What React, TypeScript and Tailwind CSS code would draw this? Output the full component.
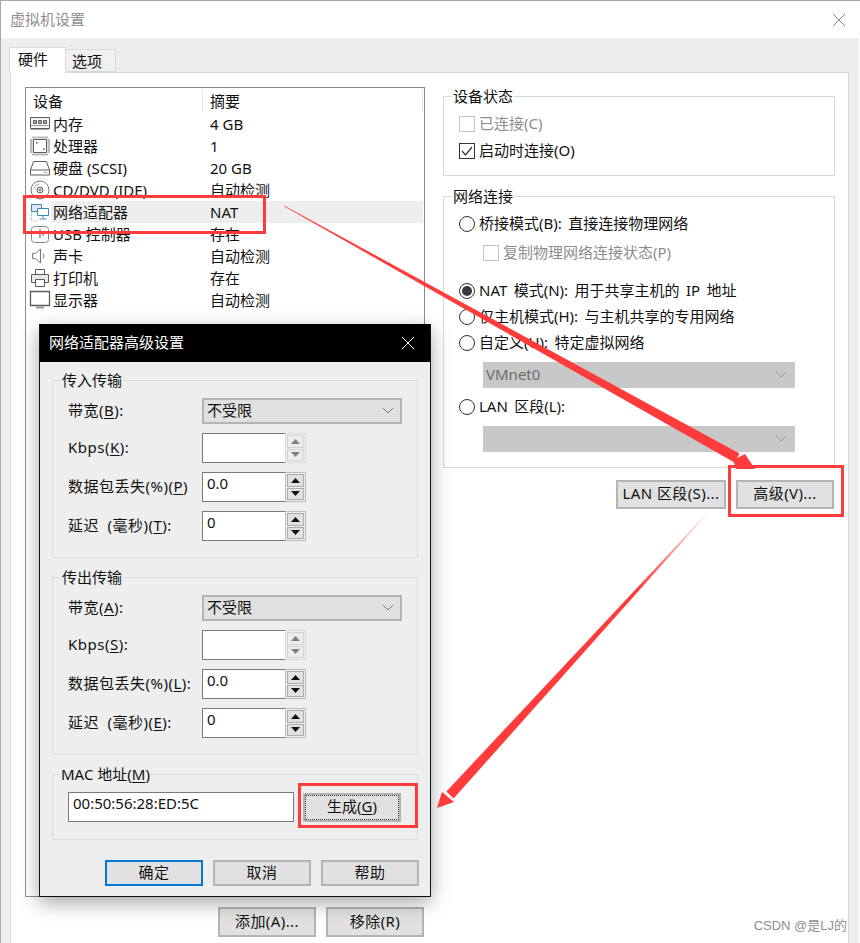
import React from 'react';

const U = ({ children }: { children: React.ReactNode }) => <span className="underline underline-offset-2">{children}</span>;

const Ic = ({ children }: { children: React.ReactNode }) => (
  <svg width="22" height="22" viewBox="0 0 22 22" fill="none" stroke="#5c5c5c" strokeWidth="1">{children}</svg>
);

const icons: Record<string, React.ReactNode> = {
  mem: (
    <Ic>
      <path d="M1.500 4.500h19v11h-19z" fill="#f4f4f4" />
      <path d="M1.500 12.500h19" stroke="#999" />
      <path d="M4.500 7.500h3v3h-3zM9.500 7.500h3v3h-3zM14.500 7.500h3v3h-3z" fill="#aaa" />
      <path d="M2 16.500h18" stroke="#aaa" />
    </Ic>
  ),
  cpu: (
    <Ic>
      <path d="M4.500 4.500h13v13h-13z" fill="#fff" />
      <path d="M4 1.500v2M6 1.500v2M8 1.500v2M10 1.500v2M12 1.500v2M14 1.500v2M16 1.500v2M18 1.500v2M4 18.500v2M6 18.500v2M8 18.500v2M10 18.500v2M12 18.500v2M14 18.500v2M16 18.500v2M18 18.500v2M1 5h2.500M1 7h2.500M1 9h2.500M1 11h2.500M1 13h2.500M1 15h2.500M1 17h2.500M18.500 5H21M18.500 7H21M18.500 9H21M18.500 11H21M18.500 13H21M18.500 15H21M18.500 17H21" stroke="#777" />
      <path d="M7 7h1.500v1.500H7zM14 13.500h1.500V15H14z" fill="#555" stroke="none" />
    </Ic>
  ),
  hdd: (
    <Ic>
      <path d="M1.500 13l3-8.500h13l3 8.500v5h-19z" fill="#fff" />
      <path d="M1.500 13h19" />
      <path d="M15 15.500h3" stroke="#999" />
    </Ic>
  ),
  cd: (
    <Ic>
      <circle cx="11" cy="11" r="9" fill="#fff" stroke="#777" />
      <circle cx="11" cy="11" r="3" fill="#ddd" />
      <circle cx="11" cy="11" r="1" fill="#666" stroke="none" />
      <path d="M5 10a6 6 0 0 1 5-5" stroke="#aaa" />
    </Ic>
  ),
  net: (
    <Ic>
      <path d="M2.500 3.500h10v7h-10z" fill="#dbeaf6" stroke="#3f85b8" />
      <path d="M8.500 7.500h11v7h-11z" fill="#fff" stroke="#3f85b8" />
      <path d="M14 14.500v3M10.500 18h7" stroke="#3f85b8" />
      <path d="M2.500 12v8M2.500 20h5" stroke="#aaa" strokeDasharray="1 1" />
    </Ic>
  ),
  usb: (
    <Ic>
      <rect x="2.500" y="3.500" width="17" height="16" rx="3" fill="#fff" stroke="#888" />
      <path d="M11 6v9M11 9l3 2v2M11 11L8 9" stroke="#555" />
    </Ic>
  ),
  snd: (
    <Ic>
      <path d="M3.500 8.500h3l5-4.500v14l-5-4.500h-3z" fill="#fff" stroke="#777" />
      <path d="M14 8.500a4 4 0 0 1 0 5" stroke="#888" />
    </Ic>
  ),
  prn: (
    <Ic>
      <path d="M6.500 2.500h9v5h-9z" fill="#fff" />
      <path d="M2.500 7.500h17v8h-17z" fill="#e8e8e8" />
      <path d="M6.500 12.500h9v7h-9z" fill="#fff" />
    </Ic>
  ),
  mon: (
    <Ic>
      <path d="M1.500 2.500h19v14h-19z" fill="#fff" strokeWidth="1.300" />
      <path d="M7 18.500h8" stroke="#999" strokeWidth="2" />
    </Ic>
  ),
};

const devices: [string, React.ReactNode, string][] = [
  ['mem', '内存', '4 GB'],
  ['cpu', '处理器', '1'],
  ['hdd', '硬盘 (SCSI)', '20 GB'],
  ['cd', 'CD/DVD (IDE)', '自动检测'],
  ['net', '网络适配器', 'NAT'],
  ['usb', 'USB 控制器', '存在'],
  ['snd', '声卡', '自动检测'],
  ['prn', '打印机', '存在'],
  ['mon', '显示器', '自动检测'],
];

const Btn = ({ w, h = 'h-[29px]', children, bc = 'border-[#b4b4b4]' }: { w: string; h?: string; children: React.ReactNode; bc?: string }) => (
  <div className={`${w} ${h} flex items-center justify-center bg-[#e1e1e1] border-2 ${bc} pb-[2px] leading-none tracking-[0.4px]`}>{children}</div>
);

const Chevron = ({ color = '#777' }: { color?: string }) => (
  <svg width="12" height="8" viewBox="0 0 12 8" fill="none" stroke={color}><path d="M1 1l5 5 5-5" /></svg>
);

const Check = ({ checked, disabled }: { checked?: boolean; disabled?: boolean }) => (
  <span className={`w-[16px] h-[16px] border flex items-center justify-center shrink-0 bg-white ${disabled ? 'border-[#c4c4c4]' : 'border-[#333]'}`}>
    {checked && <svg width="14" height="14" viewBox="0 0 14 14" fill="none" stroke="#333" strokeWidth="1.200"><path d="M2 7l3.500 4L12 3" /></svg>}
  </span>
);

const Radio = ({ on }: { on?: boolean }) => (
  <span className="w-[16px] h-[16px] rounded-full border border-[#333] flex items-center justify-center shrink-0 bg-white">
    {on && <span className="w-[10px] h-[10px] rounded-full bg-[#3a3a44]" />}
  </span>
);

const Opt = ({ children, mt = '' }: { children: React.ReactNode; mt?: string }) => (
  <div className={`h-[26px] flex items-center gap-[4px] [word-spacing:2.5px] ${mt}`}>{children}</div>
);

const Tx = ({ children, c = '' }: { children: React.ReactNode; c?: string }) => (
  <span className={`pb-[2px] whitespace-nowrap ${c}`}>{children}</span>
);

const Tri = ({ up, dim }: { up?: boolean; dim?: boolean }) => (
  <div className={`flex-1 flex items-center justify-center border ${dim ? 'bg-[#ececec] border-[#d4d4d4]' : 'bg-[#e1e1e1] border-[#adadad]'}`}>
    <svg width="9" height="5" viewBox="0 0 9 5" fill={dim ? '#808080' : '#111'}>
      <path d={up ? 'M4.500 0L9 5H0z' : 'M0 0h9L4.500 5z'} />
    </svg>
  </div>
);

const Spin = ({ value, dim }: { value?: string; dim?: boolean }) => (
  <div className="flex h-[30px] w-[104px]">
    <div className="w-[83px] bg-white border border-r-0 border-[#7a7a7a] pl-[4px] leading-[20px]">{value}</div>
    <div className={`w-[21px] flex flex-col gap-px p-px border ${dim ? 'border-[#d9d9d9]' : 'border-[#bcbcbc]'}`}>
      <Tri up dim={dim} />
      <Tri dim={dim} />
    </div>
  </div>
);

const Row = ({ label, children }: { label: React.ReactNode; children: React.ReactNode }) => (
  <div className="flex items-center">
    <div className="w-[134px] pb-[2px] tracking-[0.5px] [word-spacing:4px] whitespace-nowrap">{label}</div>
    {children}
  </div>
);

const Transfer = ({ title, keys }: { title: string; keys: [string, string, string, string] }) => (
  <fieldset className="border border-[#dcdcdc] h-[188px] pl-[15px]">
    <legend className="-ml-[7px] px-px leading-[20px]">{title}</legend>
    <div className="pt-[8px] flex flex-col gap-[9px]">
      <Row label={<>带宽(<U>{keys[0]}</U>):</>}>
        <div className="w-[200px] h-[26px] bg-[#e1e1e1] border-2 border-[#b4b4b4] flex items-center justify-between pl-[3px] pr-[6px]">
          <Tx>不受限</Tx><Chevron />
        </div>
      </Row>
      <Row label={<>Kbps(<U>{keys[1]}</U>):</>}><Spin dim /></Row>
      <Row label={<>数据包丢失(%)(<U>{keys[2]}</U>){keys[2] === 'L' ? ':' : ''}</>}><Spin value="0.0" /></Row>
      <Row label={<>延迟 (毫秒)(<U>{keys[3]}</U>):</>}><Spin value="0" /></Row>
    </div>
  </fieldset>
);

const Arrow = ({ points, head, fill = '#ff3b3b' }: { points: string; head: string; fill?: string }) => (
  <>
    <polygon points={points} fill={fill} />
    <polygon points={head} fill="#ff3b3b" />
  </>
);

export default function App() {
  return (
    <div className="relative w-[860px] h-[943px] overflow-hidden bg-white text-[15px] text-[#111] font-['Noto_Sans','Noto_Sans_CJK_SC',sans-serif] leading-[20px] border-l border-t border-[#a8a8a8]">
      <div className="h-[37px] pl-[9px] pr-[14px] flex items-center justify-between text-[#8f8f8f]">
        <Tx>虚拟机设置</Tx>
        <svg width="14" height="14" viewBox="0 0 14 14" stroke="#8a8a8a" strokeWidth="1"><path d="M1 1l12 12M13 1L1 13" /></svg>
      </div>

      <div className="h-[905px] w-[858px] bg-[#eeeeee] pl-[9px] pr-[10px] flex flex-col">
        <div className="h-[34px] flex items-end -ml-px">
          <div className="relative z-10 -mb-px w-[57px] h-[26px] bg-white border border-b-0 border-[#d9d9d9] pl-[8px] leading-[22px]">硬件</div>
          <div className="w-[50px] h-[23px] bg-[#f0f0f0] border border-l-0 border-[#d9d9d9] pl-[6px] leading-[22px]">选项</div>
        </div>

        <div className="flex-1 bg-white border border-b-0 border-[#d9d9d9] pl-[14px] pt-[13px] flex gap-[18px]">
          <div className="w-[400px] flex flex-col">
            <div className="mt-px h-[810px] border border-[#8c8c8c]">
              <div className="h-[25px] flex items-center">
                <div className="w-[177px] pl-[7px] h-[22px] border-r border-[#e4e4e4] leading-[22px]">设备</div>
                <div className="flex-1 pl-[7px] h-[22px] border-r border-[#e4e4e4] mr-px leading-[22px]">摘要</div>
              </div>
              {devices.map(([k, name, val]) => (
                <div key={k} className="h-[22px] flex items-center mr-px">
                  <div className="w-[25px] pl-[3px] h-[22px] flex items-center shrink-0">{icons[k]}</div>
                  <div className={`flex-1 h-[22px] flex items-center ${k === 'net' ? 'bg-[#eeeeee]' : ''}`}>
                    <div className="w-[159px] pl-[2px] pb-px whitespace-nowrap">{name}</div>
                    <div className="pb-px">{val}</div>
                  </div>
                </div>
              ))}
            </div>
            <div className="mt-[10px] flex justify-end gap-[10px] pr-px">
              <Btn w="w-[98px]" h="h-[30px]">添加(A)...</Btn>
              <Btn w="w-[98px]" h="h-[30px]">移除(R)</Btn>
            </div>
          </div>

          <div className="w-[392px] flex flex-col">
            <fieldset className="border border-[#d9d9d9] h-[90px] pl-[15px]">
              <legend className="-ml-[7px] px-px leading-[20px]">设备状态</legend>
              <Opt mt="mt-[5px]"><Check disabled /><Tx c="text-[#8d8d8d]">已连接(C)</Tx></Opt>
              <Opt mt="mt-px"><Check checked /><Tx>启动时连接(O)</Tx></Opt>
            </fieldset>
            <fieldset className="mt-[10px] border border-[#d9d9d9] h-[282px] pl-[15px]">
              <legend className="-ml-[7px] px-px leading-[20px]">网络连接</legend>
              <Opt mt="mt-[5px]"><Radio /><Tx>桥接模式(B): 直接连接物理网络</Tx></Opt>
              <Opt mt="mt-[3px] ml-[24px]"><Check disabled /><Tx c="text-[#8d8d8d]">复制物理网络连接状态(P)</Tx></Opt>
              <Opt mt="mt-[12px]"><Radio on /><Tx>NAT 模式(N): 用于共享主机的 IP 地址</Tx></Opt>
              <Opt><Radio /><Tx>仅主机模式(H): 与主机共享的专用网络</Tx></Opt>
              <Opt><Radio /><Tx>自定义(U): 特定虚拟网络</Tx></Opt>
              <div className="mt-[6px] ml-[24px] w-[312px] h-[26px] bg-[#c8c8c8] text-[#6d6d6d] flex items-center justify-between pl-[3px] pr-[8px]">
                <Tx>VMnet0</Tx><Chevron color="#999" />
              </div>
              <Opt mt="mt-[6px]"><Radio /><Tx>LAN 区段(L):</Tx></Opt>
              <div className="mt-[6px] ml-[24px] w-[312px] h-[26px] bg-[#c8c8c8] flex items-center justify-end pr-[8px]">
                <Chevron color="#999" />
              </div>
            </fieldset>
            <div className="mt-[12px] flex justify-end gap-[10px] pr-px">
              <Btn w="w-[110px]">LAN 区段(S)...</Btn>
              <Btn w="w-[98px]">高级(V)...</Btn>
            </div>
          </div>
        </div>
      </div>

      {/* Modal dialog over the window */}
      <div className="absolute left-[38px] top-[323px] w-[392px] h-[573px] bg-[#eeeeee] border border-t-0 border-[#111] shadow-[0_6px_18px_rgba(0,0,0,0.35)] flex flex-col">
        <div className="h-[38px] bg-black text-white flex items-center justify-between pl-[9px] pr-[16px] shrink-0">
          <Tx>网络适配器高级设置</Tx>
          <svg width="12" height="12" viewBox="0 0 12 12" stroke="#fff" strokeWidth="1"><path d="M0 0l12 12M12 0L0 12" /></svg>
        </div>
        <div className="pt-[8px] pl-[12px] pr-[12px] flex flex-col gap-[9px]">
          <Transfer title="传入传输" keys={['B', 'K', 'P', 'T']} />
          <Transfer title="传出传输" keys={['A', 'S', 'L', 'E']} />
          <fieldset className="border border-[#dcdcdc] h-[76px] pl-[15px]">
            <legend className="-ml-[8px] px-px leading-[20px]">MAC 地址(<U>M</U>)</legend>
            <div className="pt-[8px] flex items-center gap-[9px]">
              <div className="w-[226px] h-[30px] bg-white border border-[#7a7a7a] pl-[4px] leading-[20px]">00:50:56:28:ED:5C</div>
              <div className="w-[98px] h-[29px] bg-[#e1e1e1] border-2 border-[#b4b4b4] flex items-center justify-center">
                <div className="w-[94px] h-[25px] border border-dotted border-[#333] flex items-center justify-center pb-[2px]">生成(<U>G</U>)</div>
              </div>
            </div>
          </fieldset>
        </div>
        <div className="mt-[20px] pl-[65px] flex gap-[10px]">
          <Btn w="w-[98px]" h="h-[26px]" bc="border-[#0078d7]">确定</Btn>
          <Btn w="w-[98px]" h="h-[26px]">取消</Btn>
          <Btn w="w-[98px]" h="h-[26px]">帮助</Btn>
        </div>
      </div>

      {/* Annotations drawn over the screenshot */}
      <svg className="absolute -left-px -top-px" width="860" height="943" fill="none">
        <defs>
          <linearGradient id="fade" gradientUnits="userSpaceOnUse" x1="708" y1="512" x2="640" y2="590">
            <stop offset="0" stopColor="#ff3b3b" stopOpacity="0.1" />
            <stop offset="1" stopColor="#ff3b3b" />
          </linearGradient>
        </defs>
        <Arrow points="284,205.500 284.500,206.500 734.500,462.500 739.500,453.500" head="745,454 755,469 736,469 733,460" />
        <Arrow points="708,512 708.500,512.500 453.600,798.500 446.400,791.500" head="442,792 454,802 437,808" fill="url(#fade)" />
        <rect x="24.500" y="196.500" width="240" height="36" stroke="#ff3b3b" strokeWidth="3" />
        <rect x="729.500" y="466.500" width="113" height="49" stroke="#ff3b3b" strokeWidth="3" />
        <rect x="299.500" y="784.500" width="117" height="42" stroke="#ff3b3b" strokeWidth="3" />
      </svg>

      <div className="absolute right-[13px] top-[917px] text-[13px] text-[#8f8f8f] font-['Liberation_Sans','Noto_Sans_CJK_SC',sans-serif] leading-[16px]">CSDN @是LJ的</div>
    </div>
  );
}
